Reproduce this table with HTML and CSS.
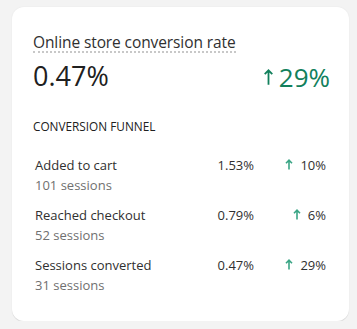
FILE: index.html
```html
<!DOCTYPE html>
<html>
<head>
<meta charset="utf-8">
<link rel="stylesheet" href="styles.css">
</head>
<body>
<div class="card">
  <div class="title"><span class="title-text">Online store conversion rate</span></div>
  <div class="headline">
    <span class="big">0.47%</span>
    <span class="delta-big"><svg class="arrow-big" viewBox="0 0 10 18" width="9" height="18"><path d="M5 17.5V1.5M0.8 5.8l4.2-4.3 4.2 4.3" fill="none" stroke="currentColor" stroke-width="2"/></svg>29%</span>
  </div>
  <div class="section">CONVERSION FUNNEL</div>
  <div class="rows">
    <div class="row">
      <div class="label"><div class="name">Added to cart</div><div class="sub">101 sessions</div></div>
      <div class="pct">1.53%</div>
      <div class="chg"><svg class="arrow" viewBox="0 0 8 11" width="8" height="11"><path d="M4 10.5V1.2M1 4.2l3-3 3 3" fill="none" stroke="currentColor" stroke-width="1.6"/></svg>10%</div>
    </div>
    <div class="row">
      <div class="label"><div class="name">Reached checkout</div><div class="sub">52 sessions</div></div>
      <div class="pct">0.79%</div>
      <div class="chg"><svg class="arrow" viewBox="0 0 8 11" width="8" height="11"><path d="M4 10.5V1.2M1 4.2l3-3 3 3" fill="none" stroke="currentColor" stroke-width="1.6"/></svg>6%</div>
    </div>
    <div class="row">
      <div class="label"><div class="name">Sessions converted</div><div class="sub">31 sessions</div></div>
      <div class="pct">0.47%</div>
      <div class="chg"><svg class="arrow" viewBox="0 0 8 11" width="8" height="11"><path d="M4 10.5V1.2M1 4.2l3-3 3 3" fill="none" stroke="currentColor" stroke-width="1.6"/></svg>29%</div>
    </div>
  </div>
</div>
</body>
</html>
```
FILE: styles.css
```css
html, body {
  margin: 0;
  background: #f3f3f3;
}
body {
  padding: 7px 8px 0 12px;
  font-family: "Open Sans", "Noto Sans", sans-serif;
  color: #303030;
}
.card {
  background: #fff;
  border-radius: 12px;
  box-shadow: 0 1px 0 #dcdcdc, 0 0 2px rgba(0,0,0,0.06);
  padding: 27px 21px 0 21px;
  height: 287px;
}
.title {
  display: flex;
}
.title-text {
  font-size: 15.5px;
  line-height: 17px;
  border-bottom: 2px dotted #c8c8c8;
  letter-spacing: -0.1px;
}
.headline {
  display: flex;
  justify-content: space-between;
  align-items: baseline;
  margin-top: 5px;
}
.big {
  font-size: 27px;
  line-height: 36px;
  color: #202020;
}
.delta-big {
  font-size: 26px;
  line-height: 36px;
  color: #12805c;
  display: flex;
  align-items: center;
  gap: 6px;
  margin-right: -2px;
}
.arrow-big {
  margin-top: 1px;
}
.section {
  margin-top: 24px;
  font-size: 11.8px;
  line-height: 14px;
  color: #202020;
}
.rows {
  margin-top: 22px;
  display: flex;
  flex-direction: column;
  gap: 10px;
  padding-left: 2px;
  padding-right: 2px;
}
.row {
  display: flex;
  align-items: flex-start;
  font-size: 13px;
  line-height: 20px;
}
.label {
  flex: 1;
}
.name {
  color: #303030;
}
.sub {
  color: #707070;
}
.pct {
  width: 60px;
  text-align: right;
}
.chg {
  width: 72px;
  display: flex;
  justify-content: flex-end;
  align-items: center;
  gap: 7px;
  height: 20px;
}
.arrow {
  color: #3aa585;
}
```
